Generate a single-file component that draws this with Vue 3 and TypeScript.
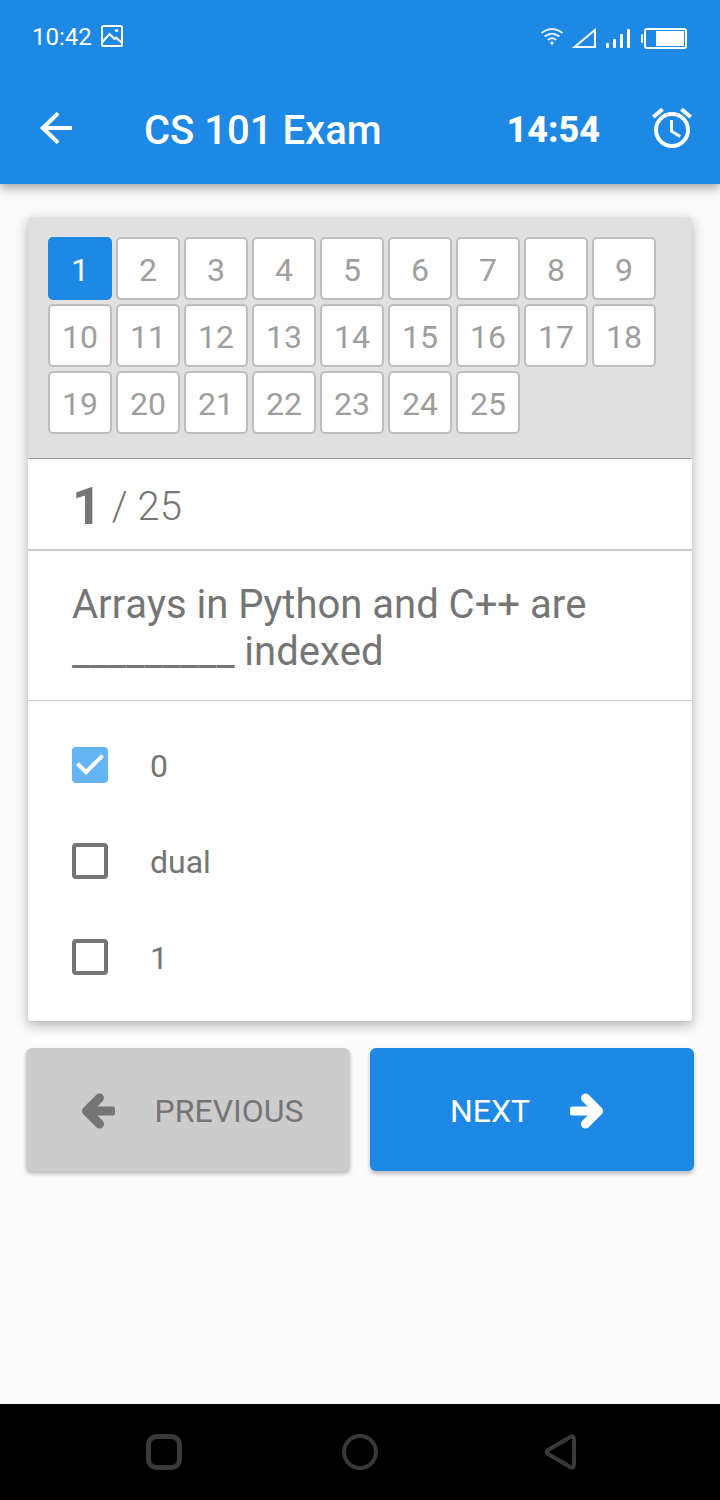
<script setup lang="ts">
import { computed, ref } from 'vue'

interface Option {
  id: string
  label: string
  checked: boolean
}

const total = 25
const current = ref(1)
const question = 'Arrays in Python and C++ are _________ indexed'
const options = ref<Option[]>([
  { id: 'option-a', label: '0', checked: true },
  { id: 'option-b', label: 'dual', checked: false },
  { id: 'option-c', label: '1', checked: false },
])
const isFirst = computed(() => current.value === 1)

function goTo(n: number): void {
  current.value = Math.min(total, Math.max(1, n))
}
</script>

<template>
  <div class="screen">
    <header class="top">
      <div class="status">
        <span class="status-time">10:42</span>
        <svg class="status-photo" viewBox="0 0 24 24" aria-hidden="true">
          <rect x="2" y="2" width="20" height="20" rx="1.5" />
          <path d="M2 18.5L9.5 10l5 5 1.5-1.3 6 5.3" />
          <circle class="solid" cx="16.5" cy="6.5" r="1.6" />
        </svg>
        <svg class="status-system" viewBox="0 0 148 26" aria-hidden="true">
          <g class="wifi">
            <path d="M1.5 10Q12 2 22.5 10" />
            <path d="M4.5 13.5Q12 8 19.5 13.5" />
            <path d="M7.8 17Q12 13.5 16.2 17" />
            <path class="solid" d="M9.8 19.5Q12 17.500 14.200 19.500L12 22.500z" />
          </g>
          <path d="M34.5 24H55V7z" />
          <g class="solid">
            <rect x="66" y="20" width="3" height="5" rx="1" />
            <rect x="73" y="16" width="3" height="9" rx="1" />
            <rect x="80" y="11" width="3" height="14" rx="1" />
            <rect x="87" y="6" width="3" height="19" rx="1" />
            <rect x="101" y="11" width="2" height="9" rx="1" />
            <rect x="116" y="8" width="28" height="15" />
          </g>
          <rect x="105" y="6" width="41" height="19" rx="2" />
        </svg>
      </div>
      <div class="app-bar">
        <button class="icon-button" type="button" aria-label="Back">
          <svg viewBox="0 0 24 24" aria-hidden="true">
            <path d="M20 11v2H8l5.4 5.4a.5.5 0 0 1 0 .7l-.7.7a.5.5 0 0 1-.7 0L4.2 12.3a.4.4 0 0 1 0-.6L12 4.2a.5.5 0 0 1 .7 0l.7.7a.5.5 0 0 1 0 .7L8 11z" />
          </svg>
        </button>
        <h1 class="title">CS 101 Exam</h1>
        <span class="timer">14:54</span>
        <svg class="clock" viewBox="0 0 24 24" aria-hidden="true">
          <path d="M12 20a7 7 0 1 1 0-14 7 7 0 0 1 0 14m0-16a9 9 0 1 0 0 18 9 9 0 0 0 0-18m.5 4H11v6l4.75 2.85.75-1.23-4-2.37zM7.88 3.39L6.6 1.86 2 5.71l1.29 1.53zM22 5.72l-4.6-3.86-1.29 1.53 4.6 3.86z" />
        </svg>
      </div>
    </header>

    <main class="content">
      <section class="card">
        <nav class="picker" aria-label="Questions">
          <button
            v-for="n in total"
            :key="n"
            type="button"
            class="cell"
            :class="{ active: n === current }"
            @click="goTo(n)"
          >{{ n }}</button>
        </nav>
        <div class="counter">
          <strong class="counter-now">{{ current }}</strong>
          <span class="counter-total">/ {{ total }}</span>
        </div>
        <h2 class="question">{{ question }}</h2>
        <div class="options">
          <label v-for="o in options" :key="o.id" class="option" :for="o.id">
            <span class="box">
              <input :id="o.id" v-model="o.checked" type="checkbox" />
              <svg v-if="o.checked" viewBox="3 3 18 18" aria-hidden="true">
                <path d="M10 17l-5-5 1.41-1.42L10 14.17l7.59-7.59L19 8z" />
              </svg>
            </span>
            <span class="option-text">{{ o.label }}</span>
          </label>
        </div>
      </section>

      <div class="actions">
        <button class="action previous" type="button" :disabled="isFirst" @click="goTo(current - 1)">
          <svg viewBox="0 0 36 36" aria-hidden="true">
            <path d="M18.5 5L5.500 18l13 13" />
            <rect x="6" y="13.5" width="28" height="9" rx="2" />
          </svg>
          PREVIOUS
        </button>
        <button class="action next" type="button" @click="goTo(current + 1)">
          NEXT
          <svg viewBox="0 0 36 36" aria-hidden="true">
            <path d="M17.5 5l13 13-13 13" />
            <rect x="2" y="13.5" width="28" height="9" rx="2" />
          </svg>
        </button>
      </div>
    </main>

    <footer class="system-nav">
      <button type="button" aria-label="Recent apps">
        <svg viewBox="0 0 48 48" aria-hidden="true">
          <rect x="8.5" y="8.5" width="31" height="31" rx="8" stroke-width="5" />
        </svg>
      </button>
      <button type="button" aria-label="Home">
        <svg viewBox="0 0 48 48" aria-hidden="true">
          <circle cx="24" cy="24" r="16" stroke-width="4" />
        </svg>
      </button>
      <button type="button" aria-label="Back">
        <svg viewBox="0 0 48 48" aria-hidden="true">
          <path d="M38.2 9Q42 7.5 42 11V37Q42 40.5 38.2 39L16 26Q13 24 16 22z" stroke-width="4" />
        </svg>
      </button>
    </footer>
  </div>
</template>

<style>
body {
  margin: 0;
}
</style>

<style scoped>
.screen {
  display: flex;
  flex-direction: column;
  min-height: 100vh;
  background: #fafafa;
  color: #757575;
  font-family: Roboto, "Liberation Sans", sans-serif;
  font-kerning: none;
}

.screen *,
.screen {
  box-sizing: border-box;
}

button {
  margin: 0;
  padding: 0;
  border: 0;
  background: none;
  color: inherit;
  font: inherit;
  font-kerning: none;
}

svg {
  display: block;
  flex: none;
}

.top {
  position: relative;
  background: #1e88e5;
  color: #fff;
  box-shadow: 0 4px 10px rgba(0, 0, 0, 0.35);
}

.status {
  display: flex;
  align-items: center;
  height: 72px;
  padding: 0 32px;
}

.status-time {
  padding-top: 2px;
  font-size: 24px;
  line-height: 28px;
}

.status svg {
  fill: none;
  stroke: #fff;
  stroke-width: 2;
}

.status .solid {
  fill: #fff;
  stroke: none;
}

.status .status-photo {
  width: 24px;
  height: 24px;
  margin-left: 8px;
}

.status .status-system {
  width: 148px;
  height: 26px;
  margin-left: auto;
}

.wifi {
  opacity: 0.85;
}

.app-bar {
  display: flex;
  align-items: center;
  height: 112px;
  padding: 0 24px 0 32px;
}

.icon-button svg,
.clock {
  width: 48px;
  height: 48px;
  fill: #fff;
}

.title {
  flex: 1;
  margin: 0 0 0 64px;
  padding-top: 6px;
  font-size: 40px;
  font-weight: 500;
  line-height: 48px;
}

.timer {
  padding-top: 4px;
  font-size: 36px;
  font-weight: 800;
  line-height: 44px;
}

.clock {
  margin-left: 48px;
}

.content {
  flex: 1;
  padding: 33px 26px;
}

.card {
  margin: 0 2px 27px;
  border-radius: 4px;
  background: #fff;
  box-shadow: 0 4px 12px rgba(0, 0, 0, 0.3);
}

.picker {
  display: flex;
  flex-wrap: wrap;
  gap: 4px;
  padding: 20px 20px 24px;
  border-bottom: 1px solid #999;
  border-radius: 4px 4px 0 0;
  background: #e0e0e0;
}

.cell {
  width: 64px;
  height: 63px;
  padding-top: 2px;
  border: 2px solid #bdbdbd;
  border-radius: 5px;
  background: #fff;
  color: #9e9e9e;
  font-size: 32px;
  line-height: 40px;
}

.cell.active {
  border-color: #1e88e5;
  background: #1e88e5;
  color: #fff;
}

.counter {
  display: flex;
  align-items: center;
  gap: 10px;
  height: 92px;
  padding: 6px 44px 0;
  border-bottom: 2px solid #ccc;
}

.counter-now {
  font-size: 52px;
  font-weight: 700;
  line-height: 60px;
}

.counter-total {
  font-size: 40px;
  font-weight: 300;
  line-height: 48px;
}

.question {
  margin: 0;
  padding: 30px 44px 25px;
  border-bottom: 1px solid #ccc;
  font-size: 40px;
  font-weight: 400;
  line-height: 47px;
}

.options {
  padding: 16px 44px;
}

.option {
  display: flex;
  align-items: center;
  gap: 42px;
  height: 96px;
  font-size: 32px;
  line-height: 40px;
}

.option-text {
  padding-top: 2px;
}

.box {
  display: grid;
  width: 36px;
  height: 36px;
}

.box input {
  grid-area: 1 / 1;
  width: 36px;
  height: 36px;
  margin: 0;
  border: 4px solid #757575;
  border-radius: 4px;
  background: #fff;
  appearance: none;
}

.box input:checked {
  border-color: #64b5f6;
  background: #64b5f6;
}

.box svg {
  grid-area: 1 / 1;
  width: 36px;
  height: 36px;
  fill: #fff;
  pointer-events: none;
}

.actions {
  display: grid;
  grid-template-columns: 1fr 1fr;
  gap: 20px;
}

.action {
  display: flex;
  align-items: center;
  justify-content: center;
  gap: 38px;
  height: 123px;
  padding-top: 2px;
  border-radius: 6px;
  box-shadow: 0 3px 4px rgba(0, 0, 0, 0.25);
  font-size: 32px;
  line-height: 40px;
}

.action svg {
  width: 36px;
  height: 36px;
  fill: currentColor;
}

.action path {
  fill: none;
  stroke: currentColor;
  stroke-width: 9;
  stroke-linecap: round;
  stroke-linejoin: round;
}

.previous {
  background: #ccc;
  color: #757575;
}

.previous svg {
  margin-left: 8px;
}

.next {
  background: #1e88e5;
  color: #fff;
}

.next svg {
  margin-right: 10px;
}

.system-nav {
  display: flex;
  align-items: center;
  justify-content: center;
  gap: 148px;
  height: 96px;
  background: #000;
}

.system-nav svg {
  width: 48px;
  height: 48px;
  fill: none;
  stroke: #3a3a3a;
}
</style>
